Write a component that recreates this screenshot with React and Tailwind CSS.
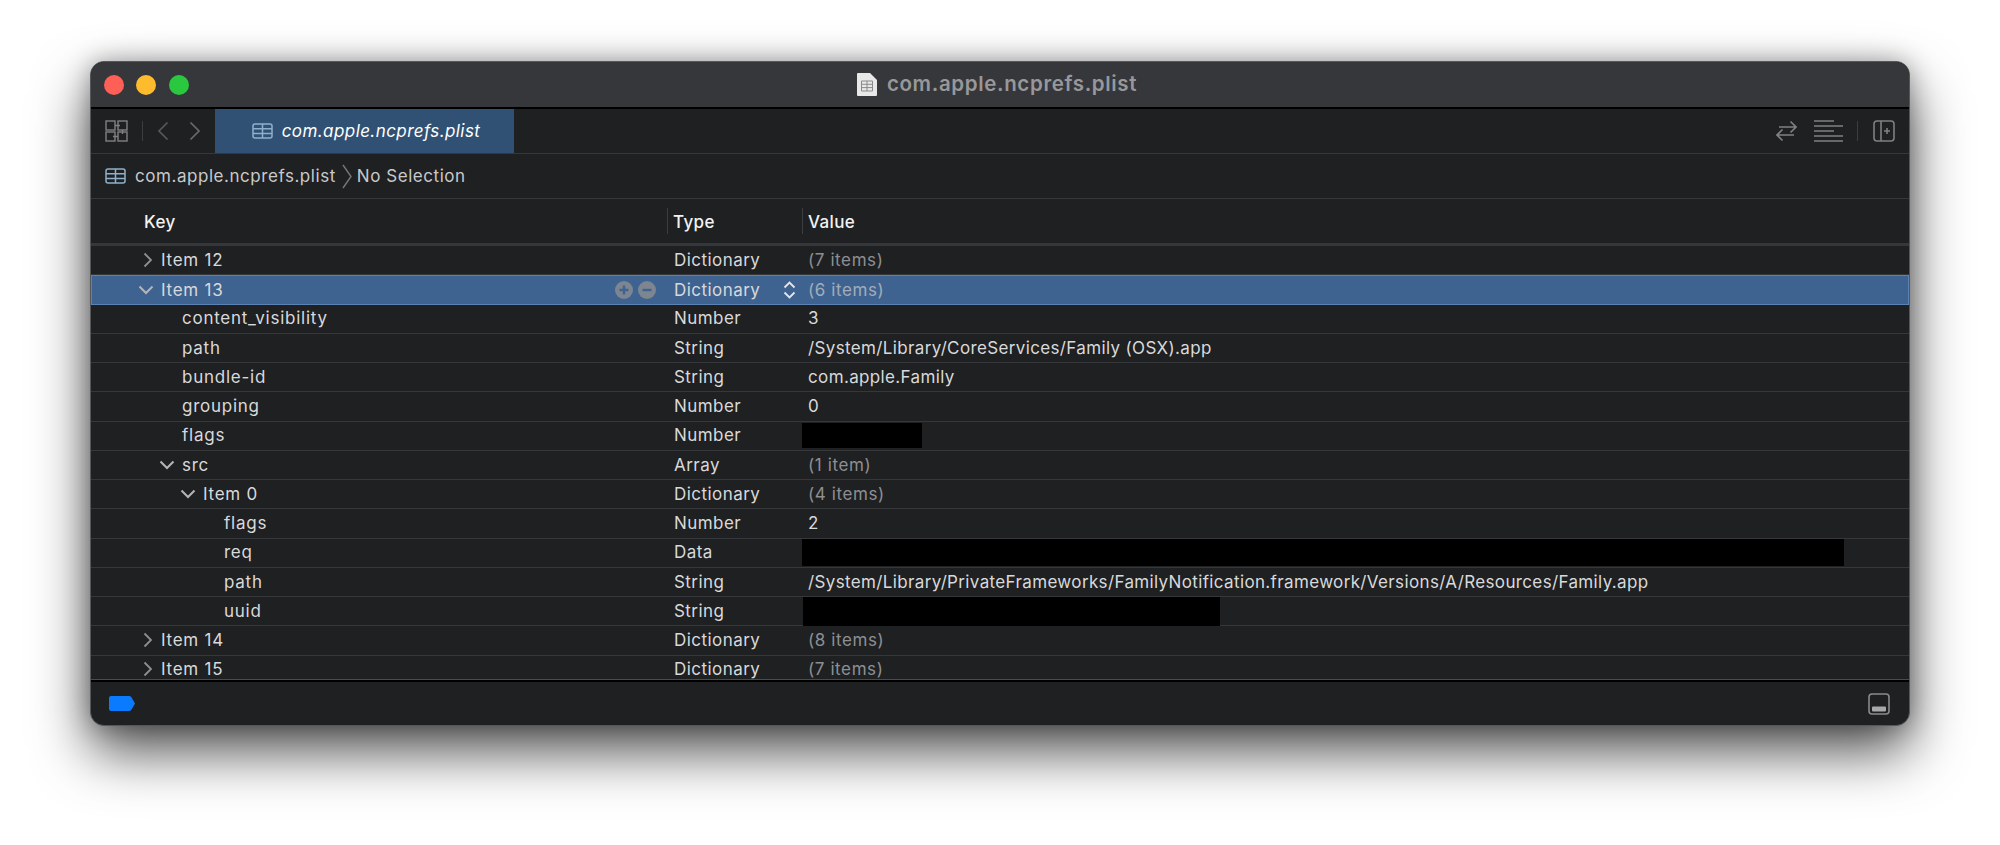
const rows = [
  { key: "Item 12", type: "Dictionary", value: "(7 items)", level: 0, arrow: "right", muted: true },
  { key: "Item 13", type: "Dictionary", value: "(6 items)", level: 0, arrow: "down", muted: true, selected: true },
  { key: "content_visibility", type: "Number", value: "3", level: 1 },
  { key: "path", type: "String", value: "/System/Library/CoreServices/Family (OSX).app", level: 1 },
  { key: "bundle-id", type: "String", value: "com.apple.Family", level: 1 },
  { key: "grouping", type: "Number", value: "0", level: 1 },
  { key: "flags", type: "Number", redact: "-ml-[6px] w-[120px] h-[25px]", level: 1 },
  { key: "src", type: "Array", value: "(1 item)", level: 1, arrow: "down", muted: true },
  { key: "Item 0", type: "Dictionary", value: "(4 items)", level: 2, arrow: "down", muted: true },
  { key: "flags", type: "Number", value: "2", level: 3 },
  { key: "req", type: "Data", redact: "-ml-[6px] w-[1042px] h-[27px]", level: 3 },
  { key: "path", type: "String", value: "/System/Library/PrivateFrameworks/FamilyNotification.framework/Versions/A/Resources/Family.app", level: 3 },
  { key: "uuid", type: "String", redact: "-ml-[5px] w-[417px] h-[29px]", level: 3 },
  { key: "Item 14", type: "Dictionary", value: "(8 items)", level: 0, arrow: "right", muted: true },
  { key: "Item 15", type: "Dictionary", value: "(7 items)", level: 0, arrow: "right", muted: true },
]

const indents = ["pl-[70px]", "pl-[91px]", "pl-[112px]", "pl-[133px]"]

function TableIcon({ className }) {
  return (
    <svg className={className} width="21" height="16" viewBox="0 0 21 16" fill="none" stroke="currentColor" strokeWidth="1.5">
      <rect x="1" y="1" width="19" height="14" rx="2" />
      <path d="M1 5.8h19M1 10.4h19M10.5 1v14" />
    </svg>
  )
}

function Chevron({ dir }) {
  if (dir === "down") {
    return (
      <svg className="-ml-[4px] mt-[1px]" width="16" height="16" viewBox="0 0 16 16" fill="none" stroke="#b5b5b7" strokeWidth="2">
        <path d="M1.5 4.5 8 11l6.5-6.5" />
      </svg>
    )
  }
  return (
    <svg className="mt-[1px]" width="12" height="16" viewBox="0 0 12 16" fill="none" stroke="#8f8f91" strokeWidth="1.8">
      <path d="M2.5 1.5 9 8l-6.5 6.5" />
    </svg>
  )
}

function Row({ row }) {
  const border = row.selected ? "bg-[#3f6390] ring-1 ring-inset ring-[#5b82b3]" : "border-b border-[#36373a]"
  const valueColor = row.selected ? "text-[#a3acb8] tracking-[0.6px]" : row.muted ? "text-[#8e8f92] tracking-[0.6px]" : ""
  return (
    <div className={"flex h-[29.25px] shrink-0 items-center text-[17px] tracking-[0.36px] text-[#d9d9da] " + border}>
      <div className={"relative flex w-[576px] items-center justify-between pr-[11px] " + indents[row.level]}>
        {row.arrow && (
          <span className="absolute top-[4px] flex w-[14px]" style={{ marginLeft: -19 }}>
            <Chevron dir={row.arrow} />
          </span>
        )}
        <span className="pt-[1px] tracking-[0.75px]">{row.key}</span>
        {row.selected && (
          <span className="flex items-center gap-[5px]">
            <svg width="18" height="18" viewBox="0 0 18 18">
              <circle cx="9" cy="9" r="9" fill="#7c8590" />
              <path d="M9 4.5v9M4.5 9h9" stroke="#3f6390" strokeWidth="2.4" />
            </svg>
            <svg width="18" height="18" viewBox="0 0 18 18">
              <circle cx="9" cy="9" r="9" fill="#7c8590" />
              <path d="M4.5 9h9" stroke="#3f6390" strokeWidth="2.4" />
            </svg>
          </span>
        )}
      </div>
      <div className="flex w-[135px] items-center justify-between pl-[7px] pr-[6px]">
        <span className="pt-[1px] tracking-[0.45px]">{row.type}</span>
        {row.selected && (
          <svg width="13" height="20" viewBox="0 0 13 20" fill="none" stroke="#e3e6ea" strokeWidth="1.8">
            <path d="M1.5 7.5 6.5 2.5 11.5 7.5M1.5 12.5 6.5 17.5 11.5 12.5" />
          </svg>
        )}
      </div>
      <div className="flex flex-1 items-center whitespace-nowrap pl-[6px]">
        {row.redact ? (
          <div className={"bg-black " + row.redact} />
        ) : (
          <span className={"pt-[1px] " + valueColor}>{row.value}</span>
        )}
      </div>
    </div>
  )
}

export default function App() {
  return (
    <div className="h-[845px] overflow-hidden bg-white pl-[90px] pt-[61px] font-['Inter',sans-serif]">
      <div className="flex h-[665px] w-[1820px] flex-col overflow-hidden rounded-[14px] border border-[#56575a] bg-[#1f2022] shadow-[0_26px_55px_rgba(0,0,0,0.68),0_0_24px_rgba(0,0,0,0.3)]">
        {/* title bar */}
        <div className="relative flex h-[47px] shrink-0 items-center justify-center border-b-2 border-black bg-[#36373a]">
          <div className="absolute left-[12.5px] flex gap-[12.5px]">
            <span className="h-[20px] w-[20px] rounded-full bg-[#fe5f57]" />
            <span className="h-[20px] w-[20px] rounded-full bg-[#febb2e]" />
            <span className="h-[20px] w-[20px] rounded-full bg-[#29c83f]" />
          </div>
          <div className="mb-[1px] mr-[6px] flex items-center gap-[10px] text-[20.5px] font-semibold tracking-[0.65px] text-[#98989a]">
            <svg width="20" height="23" viewBox="0 0 20 23">
              <path d="M1 0h12l7 7v15a1 1 0 0 1-1 1H1a1 1 0 0 1-1-1V1a1 1 0 0 1 1-1z" fill="#e8e8e8" />
              <path d="M4.5 8h11v10h-11zM4.5 11.3h11M4.5 14.6h11M10 8v10" fill="none" stroke="#8b8b8b" strokeWidth="1" />
            </svg>
            <span>com.apple.ncprefs.plist</span>
          </div>
        </div>

        {/* toolbar with tab */}
        <div className="flex h-[45px] shrink-0 items-center border-b border-[#36373a] text-[#808083]">
          <svg className="ml-[14px]" width="23" height="22" viewBox="0 0 23 22" fill="none" stroke="currentColor" strokeWidth="1.4">
            <rect x="1" y="1" width="9" height="9" />
            <rect x="13" y="1" width="9" height="9" />
            <rect x="1" y="12" width="9" height="9" />
            <rect x="13" y="12" width="9" height="9" />
            <path d="M10 5.5h5M13 16.5H8M17.5 10v4" />
          </svg>
          <div className="ml-[14px] h-[20px] w-px bg-[#3c3d40]" />
          <svg className="ml-[14px]" width="12" height="20" viewBox="0 0 12 20" fill="none" stroke="#58585b" strokeWidth="1.7">
            <path d="M10.5 1.5 2 10l8.5 8.5" />
          </svg>
          <svg className="ml-[20px]" width="12" height="20" viewBox="0 0 12 20" fill="none" stroke="#6a6a6d" strokeWidth="1.7">
            <path d="M1.5 1.5 10 10l-8.5 8.5" />
          </svg>
          <div className="ml-[14px] flex h-full w-[299px] items-center justify-center gap-[9px] bg-[#305174] pl-[3px] text-[#ffffff]">
            <TableIcon className="text-[#8fb0cc]" />
            <span className="pt-[1px] text-[17px] italic tracking-[0.42px]">com.apple.ncprefs.plist</span>
          </div>
          <div className="ml-auto flex items-center">
            <svg width="21" height="22" viewBox="0 0 21 22" fill="none" stroke="currentColor" strokeWidth="1.6">
              <path d="M3 7h16.5M14.5 1.5 20 7l-5.5 5.5M18 15H1.5M6.5 9.5 1 15l5.5 5.5" />
            </svg>
            <svg className="ml-[16px]" width="30" height="22" viewBox="0 0 30 22" fill="none" stroke="currentColor" strokeWidth="1.6">
              <path d="M1 1h20M1 6h29M1 11h20M1 16h29M1 21h29" />
            </svg>
            <div className="ml-[14px] h-[20px] w-px bg-[#3c3d40]" />
            <svg className="ml-[15px] mr-[14px]" width="22" height="22" viewBox="0 0 22 22" fill="none" stroke="currentColor" strokeWidth="1.6">
              <rect x="1" y="1" width="20" height="20" rx="3" />
              <path d="M8 1v20M11 11h6M14 8v6" />
            </svg>
          </div>
        </div>

        {/* path bar */}
        <div className="flex h-[45px] shrink-0 items-center border-b border-[#36373a] pl-[14px] text-[17px] tracking-[0.55px] text-[#c9c9ca]">
          <TableIcon className="text-[#8fb0cc]" />
          <span className="ml-[9px] pt-[1px]">com.apple.ncprefs.plist</span>
          <svg className="ml-[6px]" width="10" height="25" viewBox="0 0 10 25" fill="none" stroke="#77777a" strokeWidth="1.4">
            <path d="M1 1 9 12.5 1 24" />
          </svg>
          <span className="ml-[5px] pt-[1px]">No Selection</span>
        </div>

        {/* column headers */}
        <div className="flex h-[47px] shrink-0 items-center border-b-[3px] border-[#36373a] text-[17px] font-medium tracking-[0.36px] text-[#f2f2f2]">
          <div className="w-[576px] pl-[53px] pt-[3px]">Key</div>
          <div className="flex h-[26px] w-[135px] items-center border-l border-[#3c3d40] pl-[5px] pt-[3px]">Type</div>
          <div className="flex h-[26px] items-center border-l border-[#3c3d40] pl-[5px] pt-[3px]">Value</div>
        </div>

        {/* rows */}
        <div className="flex h-[434px] shrink-0 flex-col overflow-hidden border-b border-[#4a4b4e]">
          {rows.map((row, i) => (
            <Row key={i} row={row} />
          ))}
        </div>

        {/* footer */}
        <div className="flex flex-1 items-center justify-between border-t-2 border-black pl-[18px] pr-[19px]">
          <svg width="26" height="15" viewBox="0 0 26 15">
            <path d="M2 0h18a3 3 0 0 1 2.4 1.2L26 7.5l-3.6 6.3A3 3 0 0 1 20 15H2a2 2 0 0 1-2-2V2a2 2 0 0 1 2-2z" fill="#0a7aff" />
          </svg>
          <svg width="22" height="22" viewBox="0 0 22 22" fill="none" stroke="#8a8a8d" strokeWidth="1.6">
            <rect x="1" y="1" width="20" height="20" rx="3" />
            <rect x="4" y="13.5" width="14" height="5" rx="1" fill="#a8a8aa" stroke="none" />
          </svg>
        </div>
      </div>
    </div>
  )
}
